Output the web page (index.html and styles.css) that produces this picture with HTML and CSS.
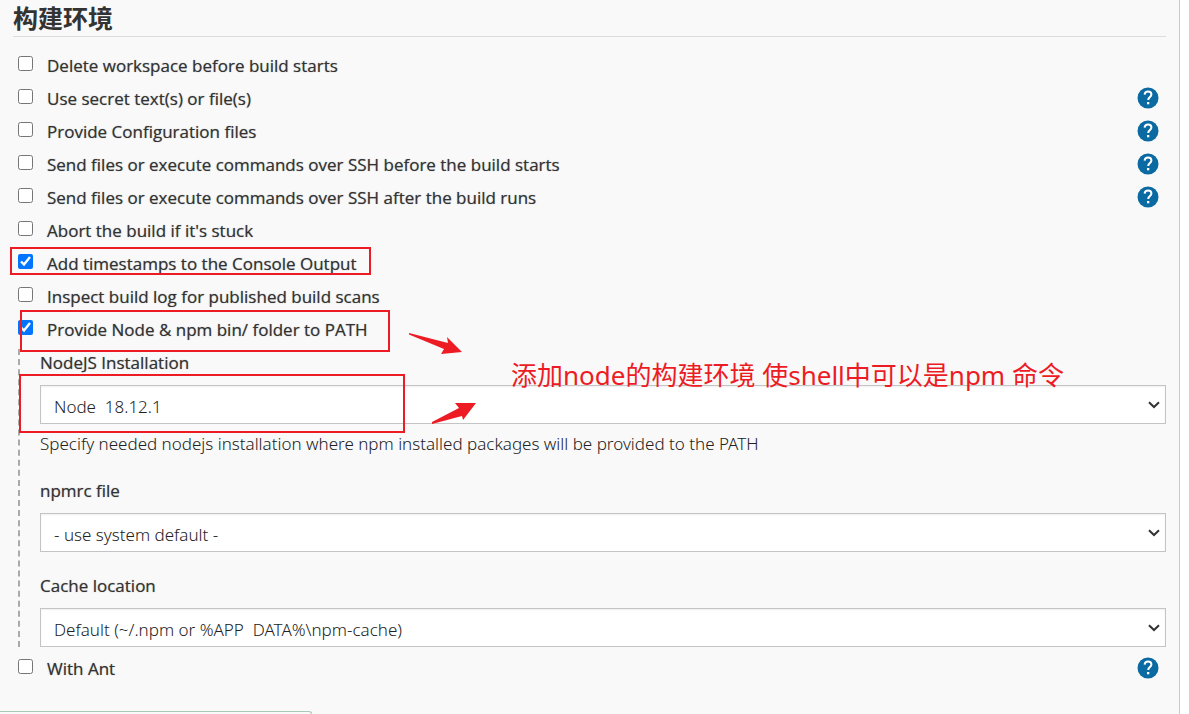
FILE: index.html
```html
<!DOCTYPE html>
<html lang="zh-CN">
<head>
<meta charset="utf-8">
<title>构建环境</title>
<link rel="stylesheet" href="styles.css">
</head>
<body>
<svg class="defs" width="0" height="0" aria-hidden="true">
  <symbol id="help" viewBox="0 0 22 22">
    <circle cx="11" cy="11" r="10.5" fill="#0b6aa2"/>
    <path d="M7.6 7.7C7.8 5.5 9.2 4.5 11.1 4.5C13.1 4.5 14.4 5.7 14.4 7.4C14.4 9.9 11.2 10 11.2 13" fill="none" stroke="#fff" stroke-width="2"/>
    <rect x="10" y="15" width="2.3" height="2.3" fill="#fff"/>
  </symbol>
  <symbol id="chevron" viewBox="0 0 12 8">
    <path d="M1 1.2L6 6L11 1.2" fill="none" stroke="#333" stroke-width="2"/>
  </symbol>
</svg>
<main class="panel">
  <h1 class="title">构建环境</h1>
  <form class="options">
    <div class="row"><label class="option"><input class="check" type="checkbox"><span>Delete workspace before build starts</span></label></div>
    <div class="row"><label class="option"><input class="check" type="checkbox"><span>Use secret text(s) or file(s)</span></label><button class="help" type="button" aria-label="Help"><svg class="help-icon"><use href="#help"/></svg></button></div>
    <div class="row"><label class="option"><input class="check" type="checkbox"><span>Provide Configuration files</span></label><button class="help" type="button" aria-label="Help"><svg class="help-icon"><use href="#help"/></svg></button></div>
    <div class="row"><label class="option"><input class="check" type="checkbox"><span>Send files or execute commands over SSH before the build starts</span></label><button class="help" type="button" aria-label="Help"><svg class="help-icon"><use href="#help"/></svg></button></div>
    <div class="row"><label class="option"><input class="check" type="checkbox"><span>Send files or execute commands over SSH after the build runs</span></label><button class="help" type="button" aria-label="Help"><svg class="help-icon"><use href="#help"/></svg></button></div>
    <div class="row"><label class="option"><input class="check" type="checkbox"><span>Abort the build if it's stuck</span></label></div>
    <div class="row"><label class="option"><input class="check" type="checkbox" checked><span>Add timestamps to the Console Output</span></label></div>
    <div class="row"><label class="option"><input class="check" type="checkbox"><span>Inspect build log for published build scans</span></label></div>
    <div class="row"><label class="option"><input class="check" type="checkbox" checked><span>Provide Node &amp; npm bin/ folder to PATH</span></label></div>
    <div class="nested">
      <div class="field">
        <label class="field-label" for="node">NodeJS Installation</label>
        <div class="select-wrap"><select class="select" id="node"><option>Node&nbsp; 18.12.1</option></select><svg class="chevron"><use href="#chevron"/></svg></div>
        <p class="hint">Specify needed nodejs installation where npm installed packages will be provided to the PATH</p>
      </div>
      <div class="field">
        <label class="field-label" for="npmrc">npmrc file</label>
        <div class="select-wrap"><select class="select" id="npmrc"><option>- use system default -</option></select><svg class="chevron"><use href="#chevron"/></svg></div>
      </div>
      <div class="field">
        <label class="field-label" for="cache">Cache location</label>
        <div class="select-wrap"><select class="select" id="cache"><option>Default (~/.npm or %APP&nbsp; DATA%\npm-cache)</option></select><svg class="chevron"><use href="#chevron"/></svg></div>
      </div>
    </div>
    <div class="row"><label class="option"><input class="check" type="checkbox"><span>With Ant</span></label><button class="help" type="button" aria-label="Help"><svg class="help-icon"><use href="#help"/></svg></button></div>
  </form>
  <div class="mark mark-timestamps"></div>
  <div class="mark mark-provide"></div>
  <div class="mark mark-node"></div>
  <svg class="arrow arrow-down" viewBox="0 0 54 23"><path d="M0 0L39 10L38 4L53 19L32 21L35 16L0 1.5Z" fill="#ed1c24"/></svg>
  <svg class="arrow arrow-up" viewBox="0 0 46 22"><path d="M0 19L27 5L23 0H44L31 17L30 13L0 21Z" fill="#ed1c24"/></svg>
  <p class="note">添加node的构建环境 使shell中可以是npm 命令</p>
  <div class="status"></div>
</main>
</body>
</html>
```
FILE: styles.css
```css
* { box-sizing: border-box; }
body {
  margin: 0;
  background: #fff;
  color: #333;
  font-family: "Noto Sans", "Noto Sans CJK SC", sans-serif;
  font-size: 17px;
  overflow: hidden;
}
.defs { position: absolute; }
.panel {
  position: relative;
  min-height: 100vh;
  margin-right: 9px;
  padding: 0 13px;
  background: #f9f9f9;
  border-right: 1px solid #c8c8c8;
}
.title {
  height: 37px;
  margin: 0 0 12px;
  border-bottom: 1px solid #ddd;
  font-family: "Noto Sans CJK SC", sans-serif;
  font-size: 25px;
  font-weight: 700;
  line-height: 34px;
}
.options { padding-left: 5px; }
.row {
  display: flex;
  align-items: flex-start;
  justify-content: space-between;
  height: 33px;
  padding-right: 7px;
}
.option,
.field-label {
  font-family: "Open Sans", sans-serif;
  text-shadow: 0 0 1px #3338;
}
.option {
  display: flex;
  align-items: flex-start;
  gap: 14px;
  line-height: 34px;
}
.check {
  width: 15px;
  height: 15px;
  margin: 7px 0 0;
  accent-color: #0075ff;
}
.help {
  display: flex;
  margin-top: 5px;
  padding: 0;
  border: 0;
  background: none;
}
.help-icon { width: 22px; height: 22px; }
.nested {
  display: grid;
  gap: 20px;
  margin: 3px 0 5px;
  padding-left: 20px;
  border-left: 2px dashed #aaa;
}
.field { display: grid; }
.field-label {
  height: 36px;
  line-height: 28px;
}
.select-wrap { display: grid; align-items: center; }
.select {
  grid-area: 1 / 1;
  width: 100%;
  height: 39px;
  padding: 4px 32px 0 13px;
  appearance: none;
  border: 1px solid #c4c4c4;
  border-radius: 0;
  background: #fff;
  box-shadow: inset 0 1px 2px #0001;
  color: #222;
  font-family: inherit;
  font-size: 17px;
  font-weight: 300;
}
.chevron {
  grid-area: 1 / 1;
  justify-self: end;
  width: 12px;
  height: 8px;
  margin-right: 6px;
  pointer-events: none;
}
.hint {
  margin: 7px 0 0;
  color: #222;
  font-weight: 300;
  line-height: 26px;
}
.mark { position: absolute; border: 2px solid #ed1c24; }
.mark-timestamps { left: 10px; top: 247px; width: 361px; height: 28px; }
.mark-provide { left: 20px; top: 310px; width: 370px; height: 42px; }
.mark-node { left: 19px; top: 374px; width: 386px; height: 59px; }
.arrow { position: absolute; }
.arrow-down { left: 409px; top: 333px; width: 54px; height: 23px; }
.arrow-up { left: 432px; top: 403px; width: 46px; height: 22px; }
.note {
  position: absolute;
  left: 511px;
  top: 356px;
  margin: 0;
  color: #ed1c24;
  font-size: 26px;
  line-height: 38px;
  white-space: nowrap;
}
.status {
  position: absolute;
  left: 0;
  bottom: 0;
  width: 312px;
  height: 3px;
  border: 1px solid #a9c9b8;
  border-width: 1px 1px 0 0;
  border-top-right-radius: 6px;
}
```
